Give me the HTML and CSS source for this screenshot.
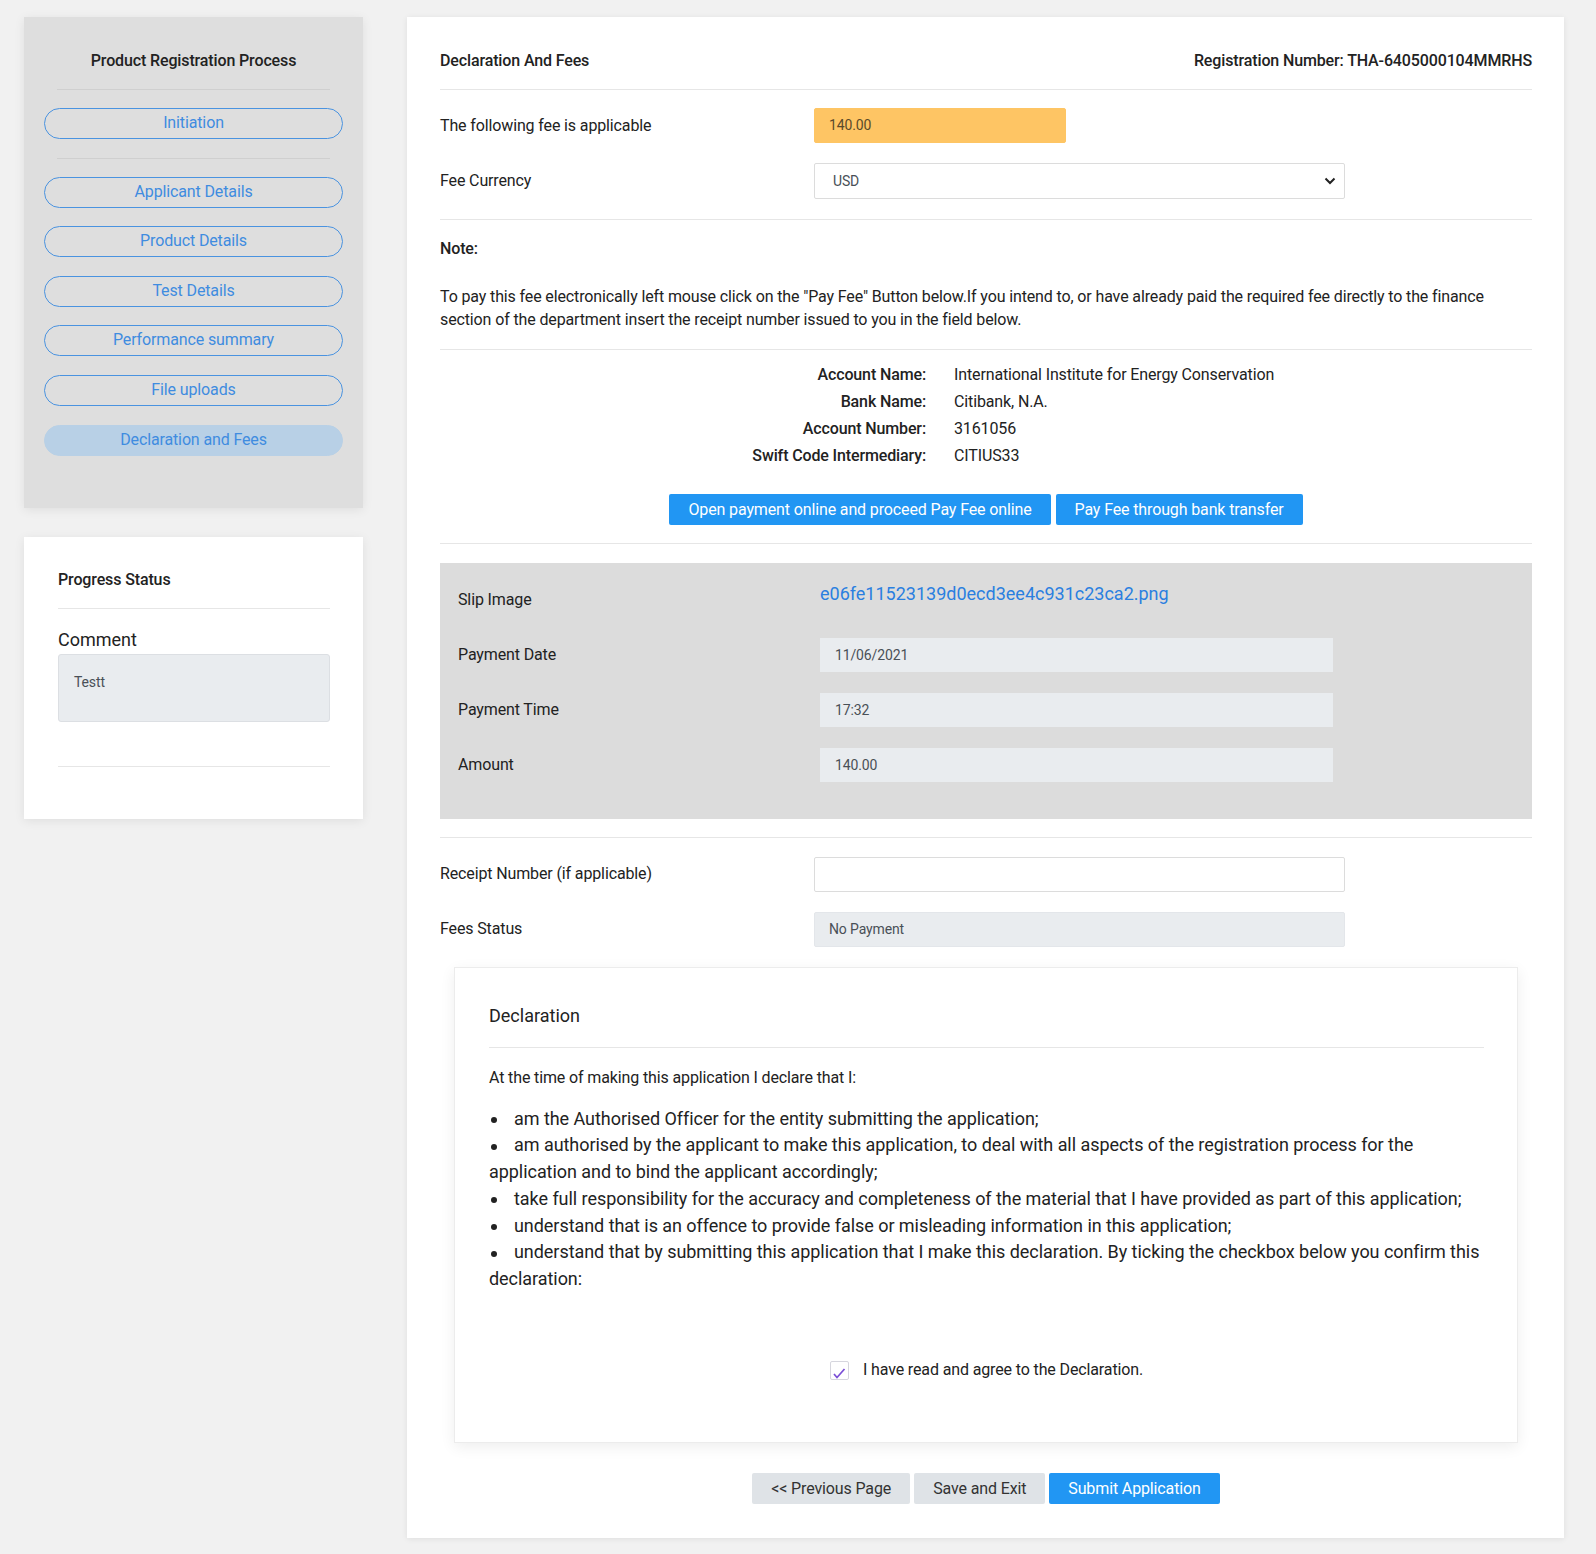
FILE: index.html
```html
<!DOCTYPE html>
<html lang="en">
<head>
  <meta charset="UTF-8">
  <meta name="viewport" content="width=device-width, initial-scale=1.0">
  <title>Declaration And Fees</title>
  <link rel="stylesheet" href="styles.css">
</head>
<body>
  <div class="page">
    <aside class="side">
      <div class="steps-card">
        <h2 class="steps-title">Product Registration Process</h2>
        <hr class="side-rule">
        <a class="step" href="#">Initiation</a>
        <hr class="side-rule">
        <a class="step" href="#">Applicant Details</a>
        <a class="step" href="#">Product Details</a>
        <a class="step" href="#">Test Details</a>
        <a class="step" href="#">Performance summary</a>
        <a class="step" href="#">File uploads</a>
        <a class="step active" href="#">Declaration and Fees</a>
      </div>

      <div class="progress-card">
        <h3 class="progress-title">Progress Status</h3>
        <hr class="progress-rule">
        <div class="comment-label">Comment</div>
        <div class="comment-box">Testt</div>
        <hr class="progress-rule comment-end">
      </div>
    </aside>

    <main class="main-card">
      <div class="head">
        <span>Declaration And Fees</span>
        <span>Registration Number: THA-6405000104MMRHS</span>
      </div>
      <hr class="rule head-rule">

      <div class="form-row">
        <label>The following fee is applicable</label>
        <div class="field fee-box">140.00</div>
      </div>
      <div class="form-row">
        <label>Fee Currency</label>
        <div class="field select">
          <span>USD</span>
          <svg width="12" height="8" viewBox="0 0 12 8"><path d="M1.5 1.5 6 6l4.5-4.5" fill="none" stroke="#222" stroke-width="2"/></svg>
        </div>
      </div>

      <hr class="rule">

      <div class="note">Note:</div>
      <p class="note-text">To pay this fee electronically left mouse click on the "Pay Fee" Button below.If you intend to, or have already paid the required fee directly to the finance section of the department insert the receipt number issued to you in the field below.</p>

      <hr class="rule">

      <div class="bank">
        <span class="bank-key">Account Name:</span><span>International Institute for Energy Conservation</span>
        <span class="bank-key">Bank Name:</span><span>Citibank, N.A.</span>
        <span class="bank-key">Account Number:</span><span>3161056</span>
        <span class="bank-key">Swift Code Intermediary:</span><span>CITIUS33</span>
      </div>

      <div class="pay-actions">
        <button class="btn btn-blue">Open payment online and proceed Pay Fee online</button>
        <button class="btn btn-blue">Pay Fee through bank transfer</button>
      </div>

      <hr class="rule">

      <div class="slip-panel">
        <div class="form-row slip-row">
          <label>Slip Image</label>
          <a class="slip-link" href="#">e06fe11523139d0ecd3ee4c931c23ca2.png</a>
        </div>
        <div class="form-row">
          <label>Payment Date</label>
          <div class="field readonly">11/06/2021</div>
        </div>
        <div class="form-row">
          <label>Payment Time</label>
          <div class="field readonly">17:32</div>
        </div>
        <div class="form-row">
          <label>Amount</label>
          <div class="field readonly">140.00</div>
        </div>
      </div>

      <hr class="rule">

      <div class="form-row">
        <label>Receipt Number (if applicable)</label>
        <div class="field"></div>
      </div>
      <div class="form-row">
        <label>Fees Status</label>
        <div class="field readonly">No Payment</div>
      </div>

      <section class="decl-card">
        <h3 class="decl-title">Declaration</h3>
        <hr class="rule decl-rule">
        <p class="decl-intro">At the time of making this application I declare that I:</p>
        <ul class="decl-list">
          <li>am the Authorised Officer for the entity submitting the application;</li>
          <li>am authorised by the applicant to make this application, to deal with all aspects of the registration process for the application and to bind the applicant accordingly;</li>
          <li>take full responsibility for the accuracy and completeness of the material that I have provided as part of this application;</li>
          <li>understand that is an offence to provide false or misleading information in this application;</li>
          <li>understand that by submitting this application that I make this declaration. By ticking the checkbox below you confirm this declaration:</li>
        </ul>
        <label class="agree">
          <span class="check"><svg width="14" height="12" viewBox="0 0 14 12"><path d="M2 7 5 10.5 12.5 2" fill="none" stroke="#7b4fd6" stroke-width="1.7"/></svg></span>
          I have read and agree to the Declaration.
        </label>
      </section>

      <div class="form-actions">
        <button class="btn btn-grey">&lt;&lt; Previous Page</button>
        <button class="btn btn-grey">Save and Exit</button>
        <button class="btn btn-blue">Submit Application</button>
      </div>
    </main>
  </div>
</body>
</html>
```

FILE: styles.css
```css
body {
  margin: 0;
  background: #f1f1f1;
  font-family: Roboto, "Liberation Sans", sans-serif;
  font-size: 16px;
  letter-spacing: -0.13px;
  color: #222;
}
.page {
  display: flex;
  align-items: flex-start;
  gap: 44px;
  padding: 17px 32px 15px 24px;
}
.side {
  width: 339px;
  flex: none;
  display: flex;
  flex-direction: column;
  gap: 29px;
}
.steps-card {
  background: #dedede;
  box-shadow: 0 2px 10px rgba(0, 0, 0, 0.08);
  padding: 34px 20px 52px;
  display: flex;
  flex-direction: column;
}
.steps-title {
  margin: 0 0 18px;
  font-size: 16px;
  line-height: 20px;
  font-weight: 500;
  text-align: center;
  color: #222;
}
.side-rule {
  border: 0;
  border-top: 1px solid #cfcfcf;
  margin: 0 13px 18px;
}
.step {
  display: block;
  height: 31px;
  line-height: 28px;
  box-sizing: border-box;
  border: 1.5px solid #4a93e0;
  border-radius: 16px;
  text-align: center;
  color: #3f8ce0;
  text-decoration: none;
  font-size: 16px;
  margin-bottom: 18.6px;
}
.step:last-child {
  margin-bottom: 0;
}
.step.active {
  background: #b8d0e6;
  border-color: #b8d0e6;
}
.progress-card {
  background: #fff;
  box-shadow: 0 2px 10px rgba(0, 0, 0, 0.08);
  padding: 33px 33px 52px 34px;
}
.progress-title {
  margin: 0;
  font-size: 16px;
  line-height: 20px;
  font-weight: 500;
}
.progress-rule {
  border: 0;
  border-top: 1px solid #e6e6e6;
  margin: 18px 0 20px;
}
.comment-label {
  font-size: 18px;
  line-height: 22px;
  letter-spacing: 0;
  margin-bottom: 3px;
}
.comment-box {
  height: 68px;
  box-sizing: border-box;
  background: #e9ecef;
  border: 1px solid #dcdfe3;
  border-radius: 3px;
  padding: 17px 15px;
  font-size: 14px;
  line-height: 20px;
  color: #495057;
}
.progress-rule.comment-end {
  margin: 44px 0 0;
}
.main-card {
  flex: 1;
  background: #fff;
  box-shadow: 0 1px 6px rgba(0, 0, 0, 0.08);
  padding: 34px 32px 34px 33px;
}
.head {
  display: flex;
  justify-content: space-between;
  line-height: 20px;
  font-weight: 500;
}
.rule {
  border: 0;
  border-top: 1px solid #e6e6e6;
  margin: 18px 0 19px;
}
.head-rule {
  margin: 18px 0;
}
.form-row {
  display: grid;
  grid-template-columns: calc((100% + 30px) / 3 - 30px) calc((100% - 30px) / 2);
  column-gap: 30px;
  align-items: center;
  margin-bottom: 20px;
}
.form-row label {
  line-height: 20px;
}
.field {
  height: 35px;
  box-sizing: border-box;
  border: 1px solid #dcdcdc;
  border-radius: 2px;
  padding: 0 14px;
  font-size: 14px;
  line-height: 33px;
  color: #495057;
  background: #fff;
}
.fee-box {
  width: 252px;
  background: #fec564;
  border-color: #fec564;
  color: #5a4a2a;
}
.select {
  height: 36px;
  display: flex;
  align-items: center;
  justify-content: space-between;
  padding: 0 8px 0 18px;
}
.readonly {
  background: #e9ecef;
  border-color: #e3e6ea;
}
.note {
  font-weight: 500;
  line-height: 20px;
}
.note-text {
  margin: 27px 0 0;
  line-height: 22.5px;
}
.bank {
  display: grid;
  grid-template-columns: 486px auto;
  column-gap: 28px;
  row-gap: 6.5px;
  line-height: 20.5px;
  margin-top: -4px;
}
.bank-key {
  text-align: right;
  font-weight: 500;
}
.pay-actions,
.form-actions {
  display: flex;
  justify-content: center;
  gap: 5px;
}
.pay-actions {
  margin-top: 27px;
}
.btn {
  height: 31px;
  border: 0;
  border-radius: 2px;
  padding: 0 19px;
  font-family: inherit;
  font-size: 16px;
  letter-spacing: -0.13px;
  cursor: pointer;
}
.btn-blue {
  background: #2196f3;
  color: #fff;
}
.btn-grey {
  background: #dfe3e7;
  color: #333;
}
.slip-panel {
  background: #dcdcdc;
  padding: 20px 18px 37px;
  margin-bottom: 18px;
}
.slip-panel .form-row {
  margin-bottom: 21px;
}
.slip-panel .form-row:last-child {
  margin-bottom: 0;
}
.slip-panel .field {
  height: 34px;
  border-color: #e9ecef;
  border-radius: 0;
}
.slip-row {
  height: 34px;
  align-items: start;
}
.slip-row label {
  line-height: 34px;
}
.slip-link {
  font-size: 18px;
  line-height: 22px;
  letter-spacing: 0;
  color: #2a7fe0;
  text-decoration: none;
}
.decl-card {
  margin: 20px 14px 30px;
  border: 1px solid #ececec;
  box-shadow: 0 4px 14px rgba(0, 0, 0, 0.07);
  padding: 37px 33px 62px 34px;
}
.decl-title {
  margin: 0;
  font-size: 18px;
  line-height: 22px;
  font-weight: 400;
  letter-spacing: 0;
}
.decl-rule {
  margin: 20px 0 19px;
}
.decl-intro {
  margin: 0;
  font-size: 16px;
  line-height: 22px;
}
.decl-list {
  list-style: none;
  margin: 17px 0 0;
  padding: 0;
  font-size: 18px;
  line-height: 26.8px;
  letter-spacing: -0.05px;
}
.decl-list li::before {
  content: "";
  display: inline-block;
  width: 6px;
  height: 6px;
  border-radius: 50%;
  background: #222;
  margin: 0 17px 0 2px;
  vertical-align: middle;
}
.agree {
  display: flex;
  align-items: center;
  justify-content: center;
  gap: 14px;
  margin-top: 67px;
  line-height: 20px;
}
.check {
  width: 19px;
  height: 19px;
  box-sizing: border-box;
  border: 1px solid #d6d6de;
  border-radius: 2px;
  display: flex;
  align-items: flex-end;
  justify-content: center;
}
.form-actions {
  gap: 4px;
}
```
